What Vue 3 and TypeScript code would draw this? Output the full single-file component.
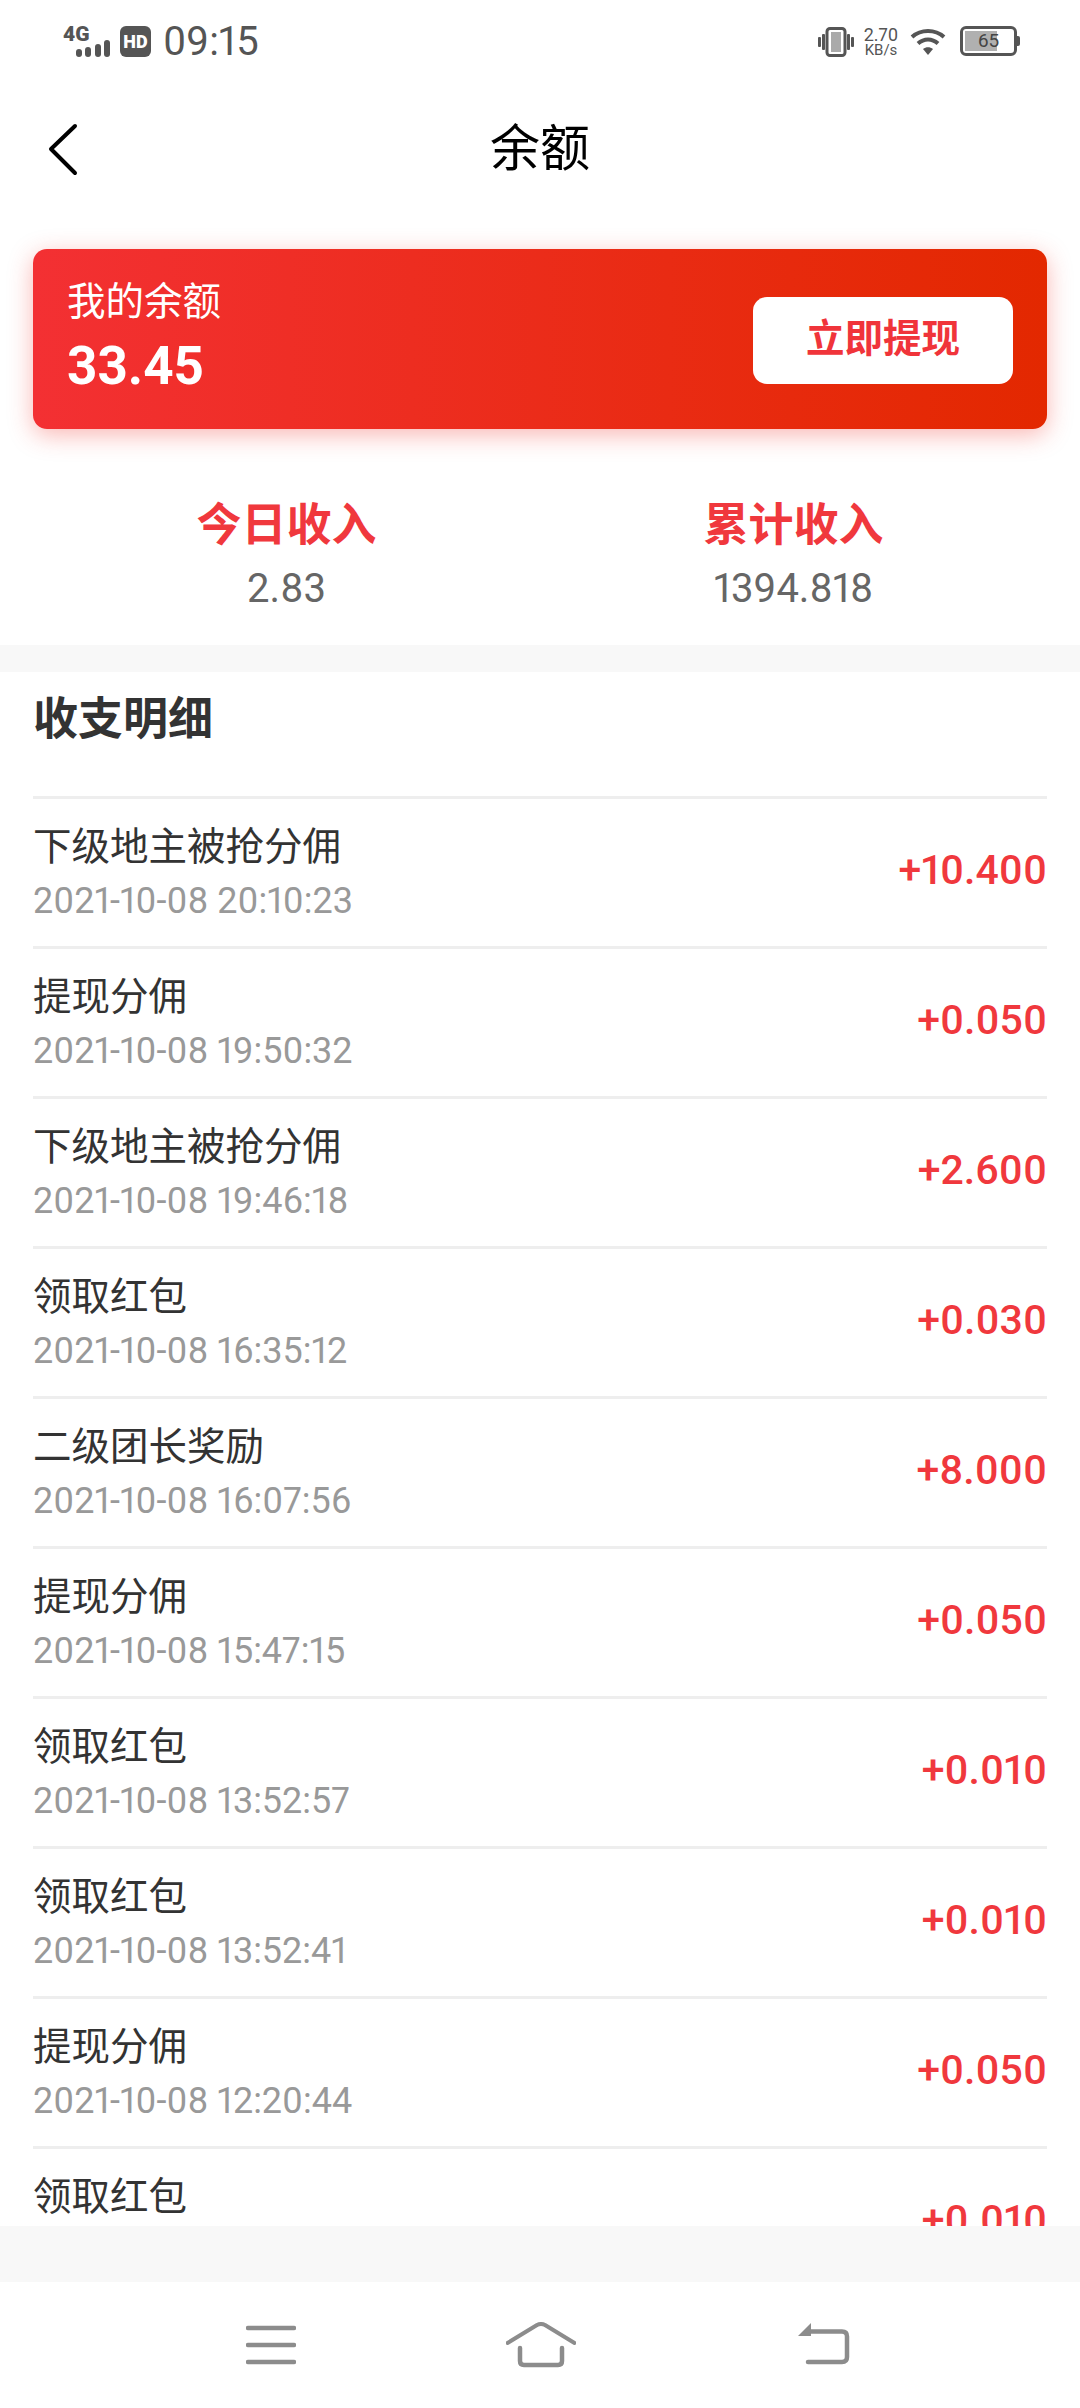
<script setup lang="ts">
interface Record {
  title: string
  time: string
  amount: string
}

const records: Record[] = [
  { title: '下级地主被抢分佣', time: '2021-10-08 20:10:23', amount: '+10.400' },
  { title: '提现分佣', time: '2021-10-08 19:50:32', amount: '+0.050' },
  { title: '下级地主被抢分佣', time: '2021-10-08 19:46:18', amount: '+2.600' },
  { title: '领取红包', time: '2021-10-08 16:35:12', amount: '+0.030' },
  { title: '二级团长奖励', time: '2021-10-08 16:07:56', amount: '+8.000' },
  { title: '提现分佣', time: '2021-10-08 15:47:15', amount: '+0.050' },
  { title: '领取红包', time: '2021-10-08 13:52:57', amount: '+0.010' },
  { title: '领取红包', time: '2021-10-08 13:52:41', amount: '+0.010' },
  { title: '提现分佣', time: '2021-10-08 12:20:44', amount: '+0.050' },
  { title: '领取红包', time: '2021-10-08 12:20:30', amount: '+0.010' },
]
</script>

<template>
  <div class="page">
    <!-- Status bar -->
    <div class="status-bar">
      <div class="status-left">
        <div class="signal">
          <span class="signal-type">4G</span>
          <svg class="signal-bars" width="36" height="18" viewBox="0 0 36 18">
            <rect x="1" y="10" width="6" height="8" rx="3" />
            <rect x="10" y="8" width="6" height="10" rx="3" />
            <rect x="20" y="5" width="6" height="13" rx="3" />
            <rect x="29" y="1" width="6" height="17" rx="3" />
          </svg>
        </div>
        <span class="hd">HD</span>
        <span class="clock">09:15</span>
      </div>
      <div class="status-right">
        <svg class="vibrate" width="38" height="30" viewBox="0 0 38 30">
          <rect x="10" y="1.5" width="18" height="27" rx="3" fill="none" stroke="#555" stroke-width="3" />
          <rect x="14" y="5" width="10" height="20" fill="#aaa" />
          <rect x="1" y="10" width="3" height="10" rx="1" fill="#555" />
          <rect x="5" y="7" width="3" height="16" rx="1" fill="#555" />
          <rect x="30" y="7" width="3" height="16" rx="1" fill="#555" />
          <rect x="34" y="10" width="3" height="10" rx="1" fill="#555" />
        </svg>
        <div class="speed">
          <span class="speed-num">2.70</span>
          <span class="speed-unit">KB/s</span>
        </div>
        <svg class="wifi" width="36" height="28" viewBox="0 0 36 28">
          <path d="M2 9 C11 1 25 1 34 9" fill="none" stroke="#555" stroke-width="4" />
          <path d="M8 15.5 C14 10 22 10 28 15.5" fill="none" stroke="#555" stroke-width="4" />
          <path d="M13 21 C16 18.5 20 18.5 23 21 L18 27 Z" fill="#555" />
        </svg>
        <div class="battery">
          <div class="battery-body">
            <div class="battery-fill"></div>
            <span class="battery-num">65</span>
          </div>
          <span class="battery-cap"></span>
        </div>
      </div>
    </div>

    <!-- Title bar -->
    <header class="title-bar">
      <svg class="back" width="30" height="54" viewBox="0 0 30 54">
        <path d="M27 3 L3 26 L27 50" fill="none" stroke="#000" stroke-width="4" stroke-linecap="round" stroke-linejoin="round" />
      </svg>
      <h1 class="title">余额</h1>
    </header>

    <!-- Balance card -->
    <section class="balance-card">
      <div class="balance-info">
        <span class="balance-label">我的余额</span>
        <span class="balance-value">33.45</span>
      </div>
      <button type="button" class="withdraw-btn">立即提现</button>
    </section>

    <!-- Income -->
    <section class="income">
      <div class="income-item">
        <span class="income-label">今日收入</span>
        <span class="income-value">2.83</span>
      </div>
      <div class="income-item">
        <span class="income-label">累计收入</span>
        <span class="income-value">1394.818</span>
      </div>
    </section>

    <div class="band"></div>

    <!-- Records -->
    <section class="records">
      <h2 class="records-title">收支明细</h2>
      <div v-for="(item, index) in records" :key="index" class="record">
        <div class="record-info">
          <span class="record-name">{{ item.title }}</span>
          <span class="record-time">{{ item.time }}</span>
        </div>
        <span class="record-amount">{{ item.amount }}</span>
      </div>
    </section>

    <div class="bottom-band"></div>

    <!-- System nav -->
    <nav class="sys-nav">
      <svg width="50" height="44" viewBox="0 0 50 44">
        <path d="M2 6 H48 M2 23 H48 M2 40 H48" fill="none" stroke="#8c8c8c" stroke-width="4.5" stroke-linecap="round" />
      </svg>
      <svg width="70" height="46" viewBox="0 0 70 46">
        <path d="M1.5 21 L31 3 Q35 1 39 3 L68.5 21" fill="none" stroke="#8c8c8c" stroke-width="4" stroke-linecap="round" stroke-linejoin="round" />
        <path d="M14 26 V39 Q14 43 18 43 H52 Q56 43 56 39 V26" fill="none" stroke="#8c8c8c" stroke-width="4.5" stroke-linecap="round" />
      </svg>
      <svg class="nav-back" width="52" height="44" viewBox="0 0 52 44">
        <path d="M13 1 V14 H0 Z" fill="#8c8c8c" />
        <path d="M12 9.5 H44 Q49 9.5 49 14.5 V35 Q49 40 44 40 H10" fill="none" stroke="#8c8c8c" stroke-width="4.5" stroke-linecap="round" />
      </svg>
    </nav>
  </div>
</template>

<style>
html,
body {
  margin: 0;
  background: #fff;
}
</style>

<style scoped>
.page {
  width: 1080px;
  height: 2408px;
  display: flex;
  flex-direction: column;
  overflow: hidden;
  background: #fff;
  font-family: Roboto, "Noto Sans CJK SC", sans-serif;
  font-variant-numeric: proportional-nums;
}

.status-bar {
  height: 78px;
  flex: none;
  display: flex;
  justify-content: space-between;
  padding: 26px 60px 0 63px;
  box-sizing: border-box;
  color: #555;
}

.status-left,
.status-right {
  display: flex;
  align-items: flex-start;
}

.signal {
  width: 48px;
  height: 31px;
  position: relative;
}

.signal-type {
  position: absolute;
  left: 0;
  top: -3px;
  font-size: 21px;
  line-height: 22px;
  font-weight: 900;
}

.signal-bars {
  position: absolute;
  left: 12px;
  top: 13px;
  fill: #555;
}

.hd {
  width: 31px;
  height: 31px;
  margin-left: 9px;
  border-radius: 6px;
  background: #555;
  color: #fff;
  font-size: 18px;
  font-weight: 900;
  line-height: 31px;
  text-align: center;
}

.clock {
  margin-left: 12px;
  font-size: 40px;
  line-height: 32px;
}

.vibrate {
  margin-top: 1px;
}

.speed {
  display: flex;
  flex-direction: column;
  align-items: center;
  margin-left: 8px;
  width: 36px;
}

.speed-num {
  font-size: 18px;
  line-height: 17px;
}

.speed-unit {
  font-size: 15px;
  line-height: 14px;
}

.wifi {
  margin-left: 11px;
  margin-top: 2px;
}

.battery {
  display: flex;
  align-items: center;
  margin-left: 14px;
}

.battery-body {
  position: relative;
  width: 57px;
  height: 30px;
  box-sizing: border-box;
  border: 3px solid #555;
  border-radius: 6px;
  padding: 2px;
}

.battery-fill {
  width: 32px;
  height: 100%;
  background: #b0b0b0;
}

.battery-num {
  position: absolute;
  left: 0;
  right: 0;
  top: 0;
  font-size: 19px;
  line-height: 24px;
  text-align: center;
  color: #444;
}

.battery-cap {
  width: 3px;
  height: 10px;
  background: #555;
  border-radius: 0 2px 2px 0;
}

.title-bar {
  height: 140px;
  flex: none;
  display: flex;
  align-items: center;
  justify-content: center;
  position: relative;
}

.back {
  position: absolute;
  left: 48px;
  top: 45px;
}

.title {
  margin: 2px 0 0;
  font-size: 50px;
  line-height: 60px;
  font-weight: 400;
  color: #000;
}

.balance-card {
  flex: none;
  height: 180px;
  margin: 31px 33px 0;
  padding: 0 34px;
  box-sizing: border-box;
  display: flex;
  align-items: center;
  justify-content: space-between;
  border-radius: 14px;
  background: linear-gradient(90deg, #f33033, #e32800);
  box-shadow: 0 6px 24px rgba(240, 50, 40, 0.35);
  color: #fff;
}

.balance-info {
  display: flex;
  flex-direction: column;
  margin-top: -4px;
}

.balance-label {
  font-size: 38.5px;
  line-height: 50px;
}

.balance-value {
  margin-top: 8px;
  font-size: 53px;
  line-height: 62px;
  font-weight: 700;
}

.withdraw-btn {
  width: 260px;
  height: 87px;
  margin-top: 3px;
  border: none;
  border-radius: 14px;
  background: #fff;
  color: #f0343a;
  font-family: inherit;
  font-size: 38.5px;
  font-weight: 700;
  padding: 0 0 12px;
}

.income {
  flex: none;
  height: 216px;
  padding: 35px 33px 0;
  box-sizing: border-box;
  display: grid;
  grid-template-columns: 1fr 1fr;
  align-items: center;
}

.income-item {
  display: flex;
  flex-direction: column;
  align-items: center;
}

.income-label {
  font-size: 45px;
  line-height: 60px;
  font-weight: 700;
  color: #f0383d;
}

.income-value {
  margin-top: 9px;
  font-size: 40px;
  line-height: 48px;
  color: #666;
}

.band {
  height: 27px;
  flex: none;
  background: #f8f8f8;
}

.records {
  flex: 1;
  min-height: 0;
  padding: 0 33px;
  overflow: hidden;
}

.records-title {
  height: 124px;
  margin: 0;
  padding-top: 18px;
  box-sizing: border-box;
  font-size: 45px;
  line-height: 60px;
  font-weight: 700;
  color: #333;
}

.record {
  height: 150px;
  box-sizing: border-box;
  border-top: 3px solid #eee;
  display: flex;
  align-items: center;
  justify-content: space-between;
}

.record-info {
  display: flex;
  flex-direction: column;
}

.record-name {
  font-size: 38.5px;
  line-height: 50px;
  color: #333;
}

.record-time {
  margin-top: 7px;
  font-size: 36px;
  line-height: 44px;
  color: #999;
}

.record-amount {
  margin-top: -6px;
  font-size: 41px;
  font-weight: 500;
  color: #f0383d;
}

.bottom-band {
  height: 56px;
  flex: none;
  background: #f8f8f8;
}

.sys-nav {
  height: 126px;
  flex: none;
  display: flex;
  align-items: flex-start;
  padding: 40px 0 0 246px;
  box-sizing: border-box;
  gap: 210px;
}

.nav-back {
  margin-left: 12px;
}
</style>
